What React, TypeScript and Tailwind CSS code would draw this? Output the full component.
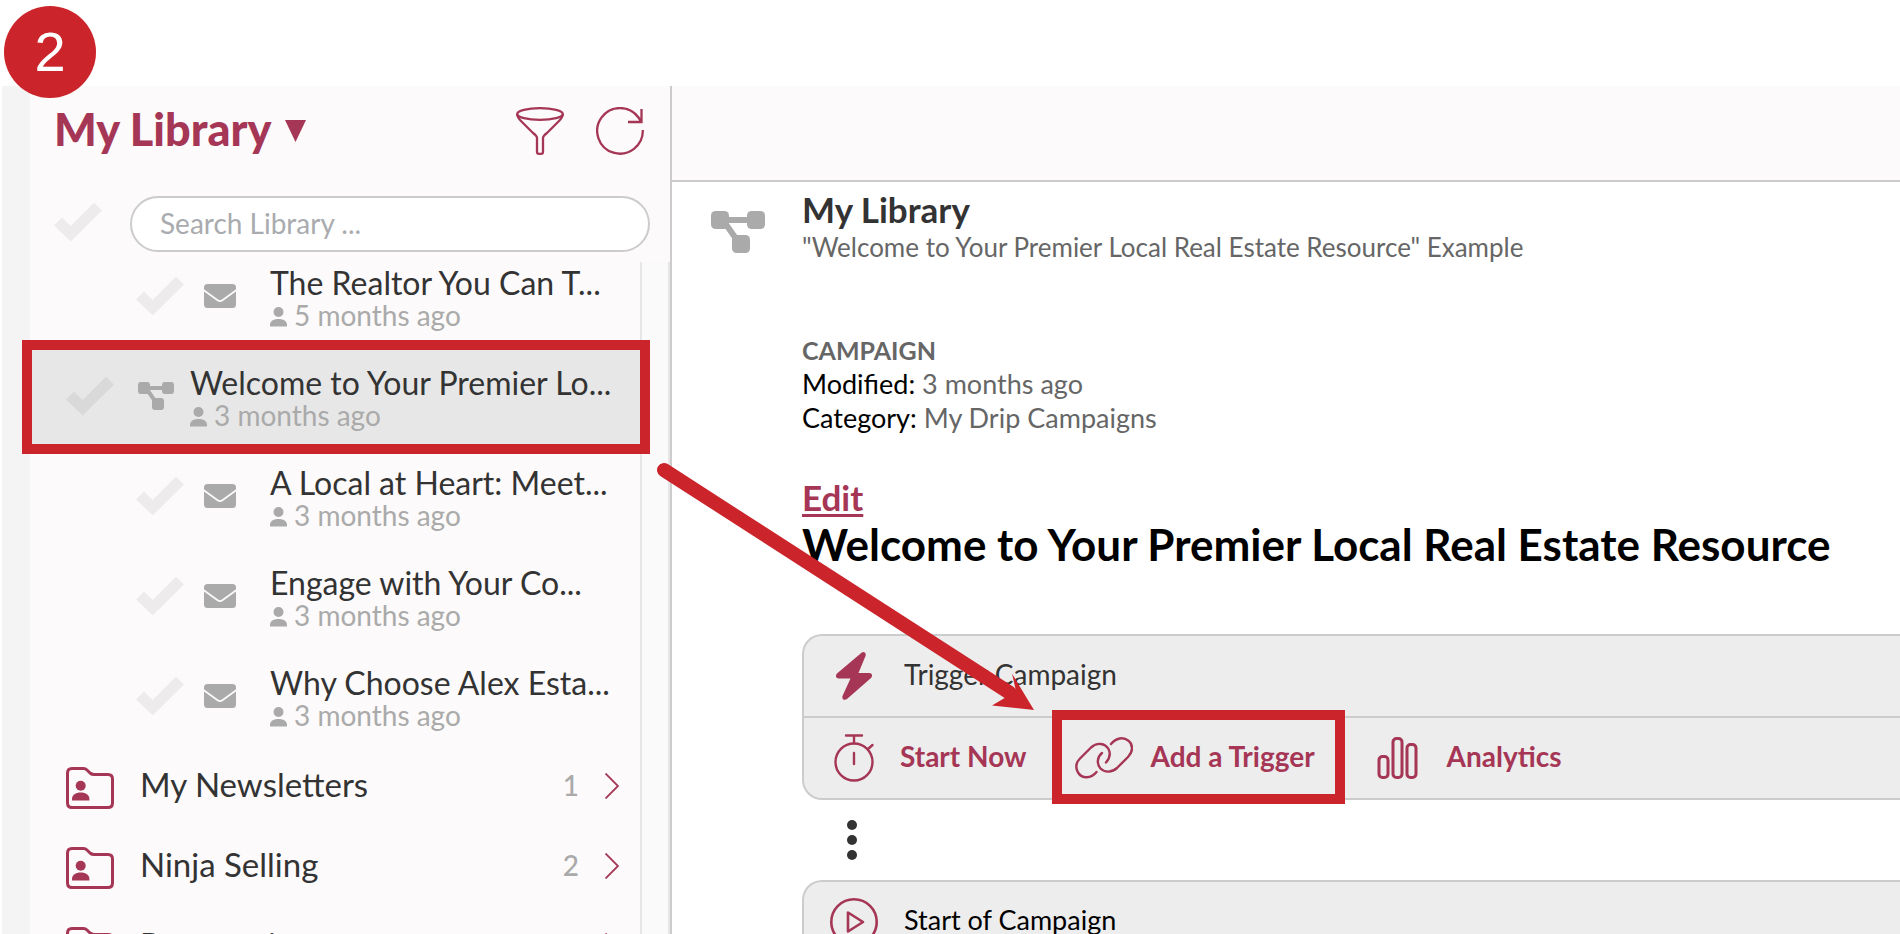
import type { ReactNode } from "react";

const FONT = "font-['Lato','Open_Sans',sans-serif]";

function Check() {
  return (
    <svg viewBox="0 0 48 40" className="h-10 w-12 shrink-0 fill-black/6" aria-hidden="true">
      <path d="M0 23.5 8 15.5 16.7 24 40 0.5 48 8.5 16.7 39.5Z" />
    </svg>
  );
}

function Envelope() {
  return (
    <svg viewBox="0 0 32 24" className="h-6 w-8 shrink-0" aria-hidden="true">
      <rect width="32" height="24" rx="3.5" fill="#aaa" />
      <path d="M-1 5.6 13.6 16.2Q16 18 18.400 16.200L33 5.600" fill="none" stroke="#fcfafb" strokeWidth="1.700" />
    </svg>
  );
}

function Flow({ className }: { className: string }) {
  return (
    <svg viewBox="0 0 54 42" className={className} aria-hidden="true">
      <g fill="#aaa">
        <rect width="18" height="18" rx="4.500" />
        <rect x="36" width="18" height="18" rx="4.500" />
        <rect x="21" y="24" width="18" height="18" rx="4.500" />
      </g>
      <path d="M10 9H44M14 12 28 32" stroke="#aaa" strokeWidth="6" />
    </svg>
  );
}

function Person() {
  return (
    <svg viewBox="0 0 17 20" className="mt-1 h-5 w-[17px] shrink-0 fill-[#aaa]" aria-hidden="true">
      <circle cx="8.500" cy="5" r="5" />
      <path d="M0 19.500v-1.500c0-4 3.500-6 8.500-6s8.500 2 8.500 6v1.500z" />
    </svg>
  );
}

function Folder() {
  return (
    <svg viewBox="0 0 48 42" className="mt-1 h-[42px] w-12 shrink-0" aria-hidden="true">
      <path
        d="M6 1.500H17.500Q19.500 1.500 21 3L24 6Q25.800 7.500 28 7.500H42Q46.500 7.500 46.500 12V36Q46.500 40.500 42 40.500H6Q1.500 40.500 1.500 36V6Q1.500 1.500 6 1.500Z"
        fill="none"
        stroke="#a53655"
        strokeWidth="3"
      />
      <g fill="#a53655">
        <circle cx="14.700" cy="18.700" r="5" />
        <path d="M6 33.500v-1.500c0-4 3.500-6.500 8.700-6.500s8.700 2.500 8.700 6.500v1.500z" />
      </g>
    </svg>
  );
}

function Item({ title, age, selected = false }: { title: string; age: string; selected?: boolean }) {
  return (
    <li
      className={
        selected
          ? "flex h-[100px] items-center bg-[#e7e7e7] pl-9"
          : "flex h-[100px] items-center pl-[106px]"
      }
    >
      <Check />
      <span className={selected ? "ml-6 mr-4 shrink-0" : "ml-5 mr-[34px] shrink-0"}>
        {selected ? <Flow className="h-7 w-9" /> : <Envelope />}
      </span>
      <a href="#item" className="block pt-1">
        <span className="block text-[32px] leading-[34px] whitespace-nowrap text-[#333]">{title}</span>
        <span className="flex items-center gap-[7px] text-[28px] leading-[30px] whitespace-nowrap text-[#aaa]">
          <Person />
          {age}
        </span>
      </a>
    </li>
  );
}

function FolderRow({ name, count }: { name: string; count: number }) {
  return (
    <li>
      <a href="#folder" className="flex h-20 items-center pl-9 pr-[21px] text-[#333]">
        <Folder />
        <span className="ml-[26px] flex-1 pb-1 text-[33px] leading-10">{name}</span>
        <span className="pb-0.5 text-[28px] leading-10 font-medium text-[#aaa]">{count}</span>
        <svg viewBox="0 0 14 26" className="ml-[26px] h-[26px] w-3.5" aria-hidden="true">
          <path d="M0.500 0.500 13 13 0.500 25.500" fill="none" stroke="#a53655" strokeWidth="1.800" />
        </svg>
      </a>
    </li>
  );
}

function Action({ icon, label, marked = false, className }: { icon: ReactNode; label: string; marked?: boolean; className: string }) {
  return (
    <button type="button" className={`relative flex items-center font-bold text-[#a53655] ${className}`}>
      {icon}
      <span className="pb-1 text-[28px] leading-8 whitespace-nowrap">{label}</span>
      {marked && <span className="absolute -top-2 -right-[30px] -bottom-1.5 -left-[23px] border-[10px] border-[#cb242b]" />}
    </button>
  );
}

export default function App() {
  return (
    <div className={`relative flex h-screen flex-col overflow-hidden bg-white pt-[86px] pl-0.5 ${FONT}`}>
      <div className="flex min-h-0 flex-1">
        <div className="w-7 shrink-0 bg-[#f4f4f4]" />
        <aside className="flex w-[642px] shrink-0 flex-col border-r-2 border-[#ccc] bg-[#fcfafb]">
          <header className="flex h-[90px] shrink-0 items-center pr-[26px] pl-6">
            <button type="button" className="flex items-center gap-[14px] text-[#a53655]">
              <span className="pb-1 text-[45px] leading-[52px] font-black">My Library</span>
              <svg viewBox="0 0 21 22" className="h-[22px] w-[21px] fill-[#a53655]" aria-hidden="true">
                <path d="M0 0H21L10.500 22Z" />
              </svg>
            </button>
            <button type="button" aria-label="Filter" className="ml-auto">
              <svg viewBox="0 0 48 48" className="size-12" fill="none" stroke="#a53655" strokeWidth="2.300" aria-hidden="true">
                <ellipse cx="24" cy="7" rx="22.800" ry="5.800" />
                <path d="M1.200 7C1 10 3 12 5 14L17 26Q21 29 21 31V45Q21 46.800 23 46.800H25Q27 46.800 27 45V31Q27 29 31 26L43 14C45 12 47 10 46.800 7" />
              </svg>
            </button>
            <button type="button" aria-label="Refresh" className="ml-8">
              <svg viewBox="0 0 48 48" className="size-12" fill="none" stroke="#a53655" strokeWidth="2.300" aria-hidden="true">
                <path d="M46.800 23A22.800 22.800 0 1 1 42.500 10.500L45.500 15M45.500 2V15H32" />
              </svg>
            </button>
          </header>
          <div className="flex h-[86px] shrink-0 items-center pt-[10px] pr-5 pl-[26px]">
            <span className="-ml-0.5 pb-1">
              <Check />
            </span>
            <input
              type="text"
              aria-label="Search Library"
              placeholder="Search Library ..."
              className="ml-7 h-14 min-w-0 flex-1 rounded-full border-2 border-[#ccc] bg-white px-7 pb-0.5 text-[28px] text-[#333] placeholder:text-[#a9abae]"
            />
          </div>
          <div className="flex min-h-0 flex-1 overflow-hidden">
            <ul className="-mt-4 min-w-0 flex-1">
              <Item title="The Realtor You Can T..." age="5 months ago" />
              <Item title="Welcome to Your Premier Lo..." age="3 months ago" selected />
              <Item title="A Local at Heart: Meet..." age="3 months ago" />
              <Item title="Engage with Your Co..." age="3 months ago" />
              <Item title="Why Choose Alex Esta..." age="3 months ago" />
              <FolderRow name="My Newsletters" count={1} />
              <FolderRow name="Ninja Selling" count={2} />
              <FolderRow name="Prospecting" count={3} />
            </ul>
            <div className="w-[30px] shrink-0 border-x-2 border-[#e6e6e6] bg-[#fafafa]" />
          </div>
        </aside>

        <main className="flex min-w-0 flex-1 flex-col">
          <div className="h-24 shrink-0 border-b-2 border-[#ccc] bg-[#fcfafb]" />
          <div className="flex min-h-0 flex-1 pl-[39px]">
            <Flow className="mt-[29px] h-[42px] w-[54px] shrink-0" />
            <div className="ml-[37px] min-w-0 flex-1">
              <h1 className="mt-[7px] text-[35px] leading-10 font-bold text-[#333]">My Library</h1>
              <p className="mt-0.5 text-[26px] leading-8 text-[#666]">"Welcome to Your Premier Local Real Estate Resource" Example</p>
              <p className="mt-[70px] text-[25px] leading-[34px] font-bold text-[#666]">CAMPAIGN</p>
              <p className="text-[27px] leading-[34px] text-[#666]"><span className="text-black">Modified:</span> 3 months ago</p>
              <p className="text-[27px] leading-[34px] text-[#666]"><span className="text-black">Category:</span> My Drip Campaigns</p>
              <a href="#edit" className="mt-[42px] block w-fit text-[35px] leading-10 font-bold text-[#a53655] underline decoration-3 underline-offset-3">Edit</a>
              <h2 className="mt-px text-[44px] leading-[52px] font-bold whitespace-nowrap text-black">Welcome to Your Premier Local Real Estate Resource</h2>

              <section className="mt-16 rounded-l-[20px] border-2 border-r-0 border-[#ccc] bg-[#ededed]">
                <div className="flex h-20 items-center pl-8">
                  <svg viewBox="0 0 36 48" className="h-12 w-9" aria-hidden="true">
                    <path d="M25.500 0.700 1 21.500C-1 24 0 26.500 3 26.500H14.500L6.500 44C5.500 47 8.500 49 11 47L35 26C37 23.500 36 21 33 21H22.500L29.500 4C30.500 1 28-1 25.500 0.700Z" fill="#a53655" />
                  </svg>
                  <span className="ml-8 pb-1 text-[28px] leading-8 text-[#333]">Trigger Campaign</span>
                </div>
                <div className="flex h-[82px] items-stretch border-t-2 border-[#ccc] pl-[30px]">
                  <Action
                    label="Start Now"
                    className="gap-[26px]"
                    icon={
                      <svg viewBox="0 0 40 48" className="h-12 w-10" fill="none" stroke="#a53655" strokeWidth="2.400" strokeLinecap="round" aria-hidden="true">
                        <circle cx="20" cy="28" r="18.500" />
                        <path d="M12 1.500H28M20 2V9M20 19V30M34 15 38.500 11" />
                      </svg>
                    }
                  />
                  <Action
                    label="Add a Trigger"
                    marked
                    className="ml-12 gap-[18px]"
                    icon={
                      <svg viewBox="0 0 58 42" className="h-[42px] w-[58px]" fill="none" stroke="#a53655" strokeWidth="2.400" strokeLinecap="round" aria-hidden="true">
                        <path d="M21.500 35C16 42 7 42 3 35.500C0 30 1 25.500 5 21.500L16 10.500C22 5 30 6 33.500 12C36 17 34.500 21.500 31 25.500" />
                        <path d="M27 16C22 20 21.500 27 25.500 31.500C30 36 37 35.500 42 31L53 20C58 15 58.500 8 53.500 3.700C48 -0.500 41 1 36 7" />
                      </svg>
                    }
                  />
                  <Action
                    label="Analytics"
                    className="ml-[62px] gap-7"
                    icon={
                      <svg viewBox="0 0 42 42" className="size-[42px]" fill="none" stroke="#a53655" strokeWidth="3" aria-hidden="true">
                        <rect x="2" y="19.500" width="9" height="21" rx="3.500" />
                        <rect x="16" y="1.500" width="9" height="39" rx="3.500" />
                        <rect x="30" y="7.500" width="9" height="33" rx="3.500" />
                      </svg>
                    }
                  />
                </div>
              </section>

              <svg viewBox="0 0 10 40" className="mt-5 ml-[45px] h-10 w-2.5 fill-[#333]" aria-hidden="true">
                <circle cx="5" cy="5" r="5" />
                <circle cx="5" cy="20" r="5" />
                <circle cx="5" cy="35" r="5" />
              </svg>

              <section className="mt-5 rounded-tl-[20px] border-t-2 border-l-2 border-[#ccc] bg-[#ededed]">
                <div className="flex h-20 items-center pl-[26px]">
                  <svg viewBox="0 0 48 48" className="size-12" fill="none" stroke="#a53655" strokeWidth="2.600" strokeLinejoin="round" aria-hidden="true">
                    <circle cx="24" cy="24" r="22.700" />
                    <path d="M18 14.500V33.500L33 24Z" />
                  </svg>
                  <span className="ml-[26px] pb-1 text-[27px] leading-8 text-black">Start of Campaign</span>
                </div>
              </section>
            </div>
          </div>
        </main>
      </div>

      <div className="absolute top-[340px] left-[22px] h-[114px] w-[628px] border-[10px] border-[#cb242b]" />
      <svg viewBox="0 0 400 270" className="pointer-events-none absolute top-[450px] left-[650px] h-[270px] w-[400px]" aria-hidden="true">
        <path d="M14 20 360 243" stroke="#cb242b" strokeWidth="14" strokeLinecap="round" />
        <path d="M384 260 342 255.500 358 246 366 241 362 223.500Z" fill="#cb242b" />
      </svg>
      <div className="absolute top-1.5 left-1 flex size-[92px] items-center justify-center rounded-full bg-[#cb242b] font-['Liberation_Sans',Arial,sans-serif] text-[56px] leading-none text-white">
        2
      </div>
    </div>
  );
}
